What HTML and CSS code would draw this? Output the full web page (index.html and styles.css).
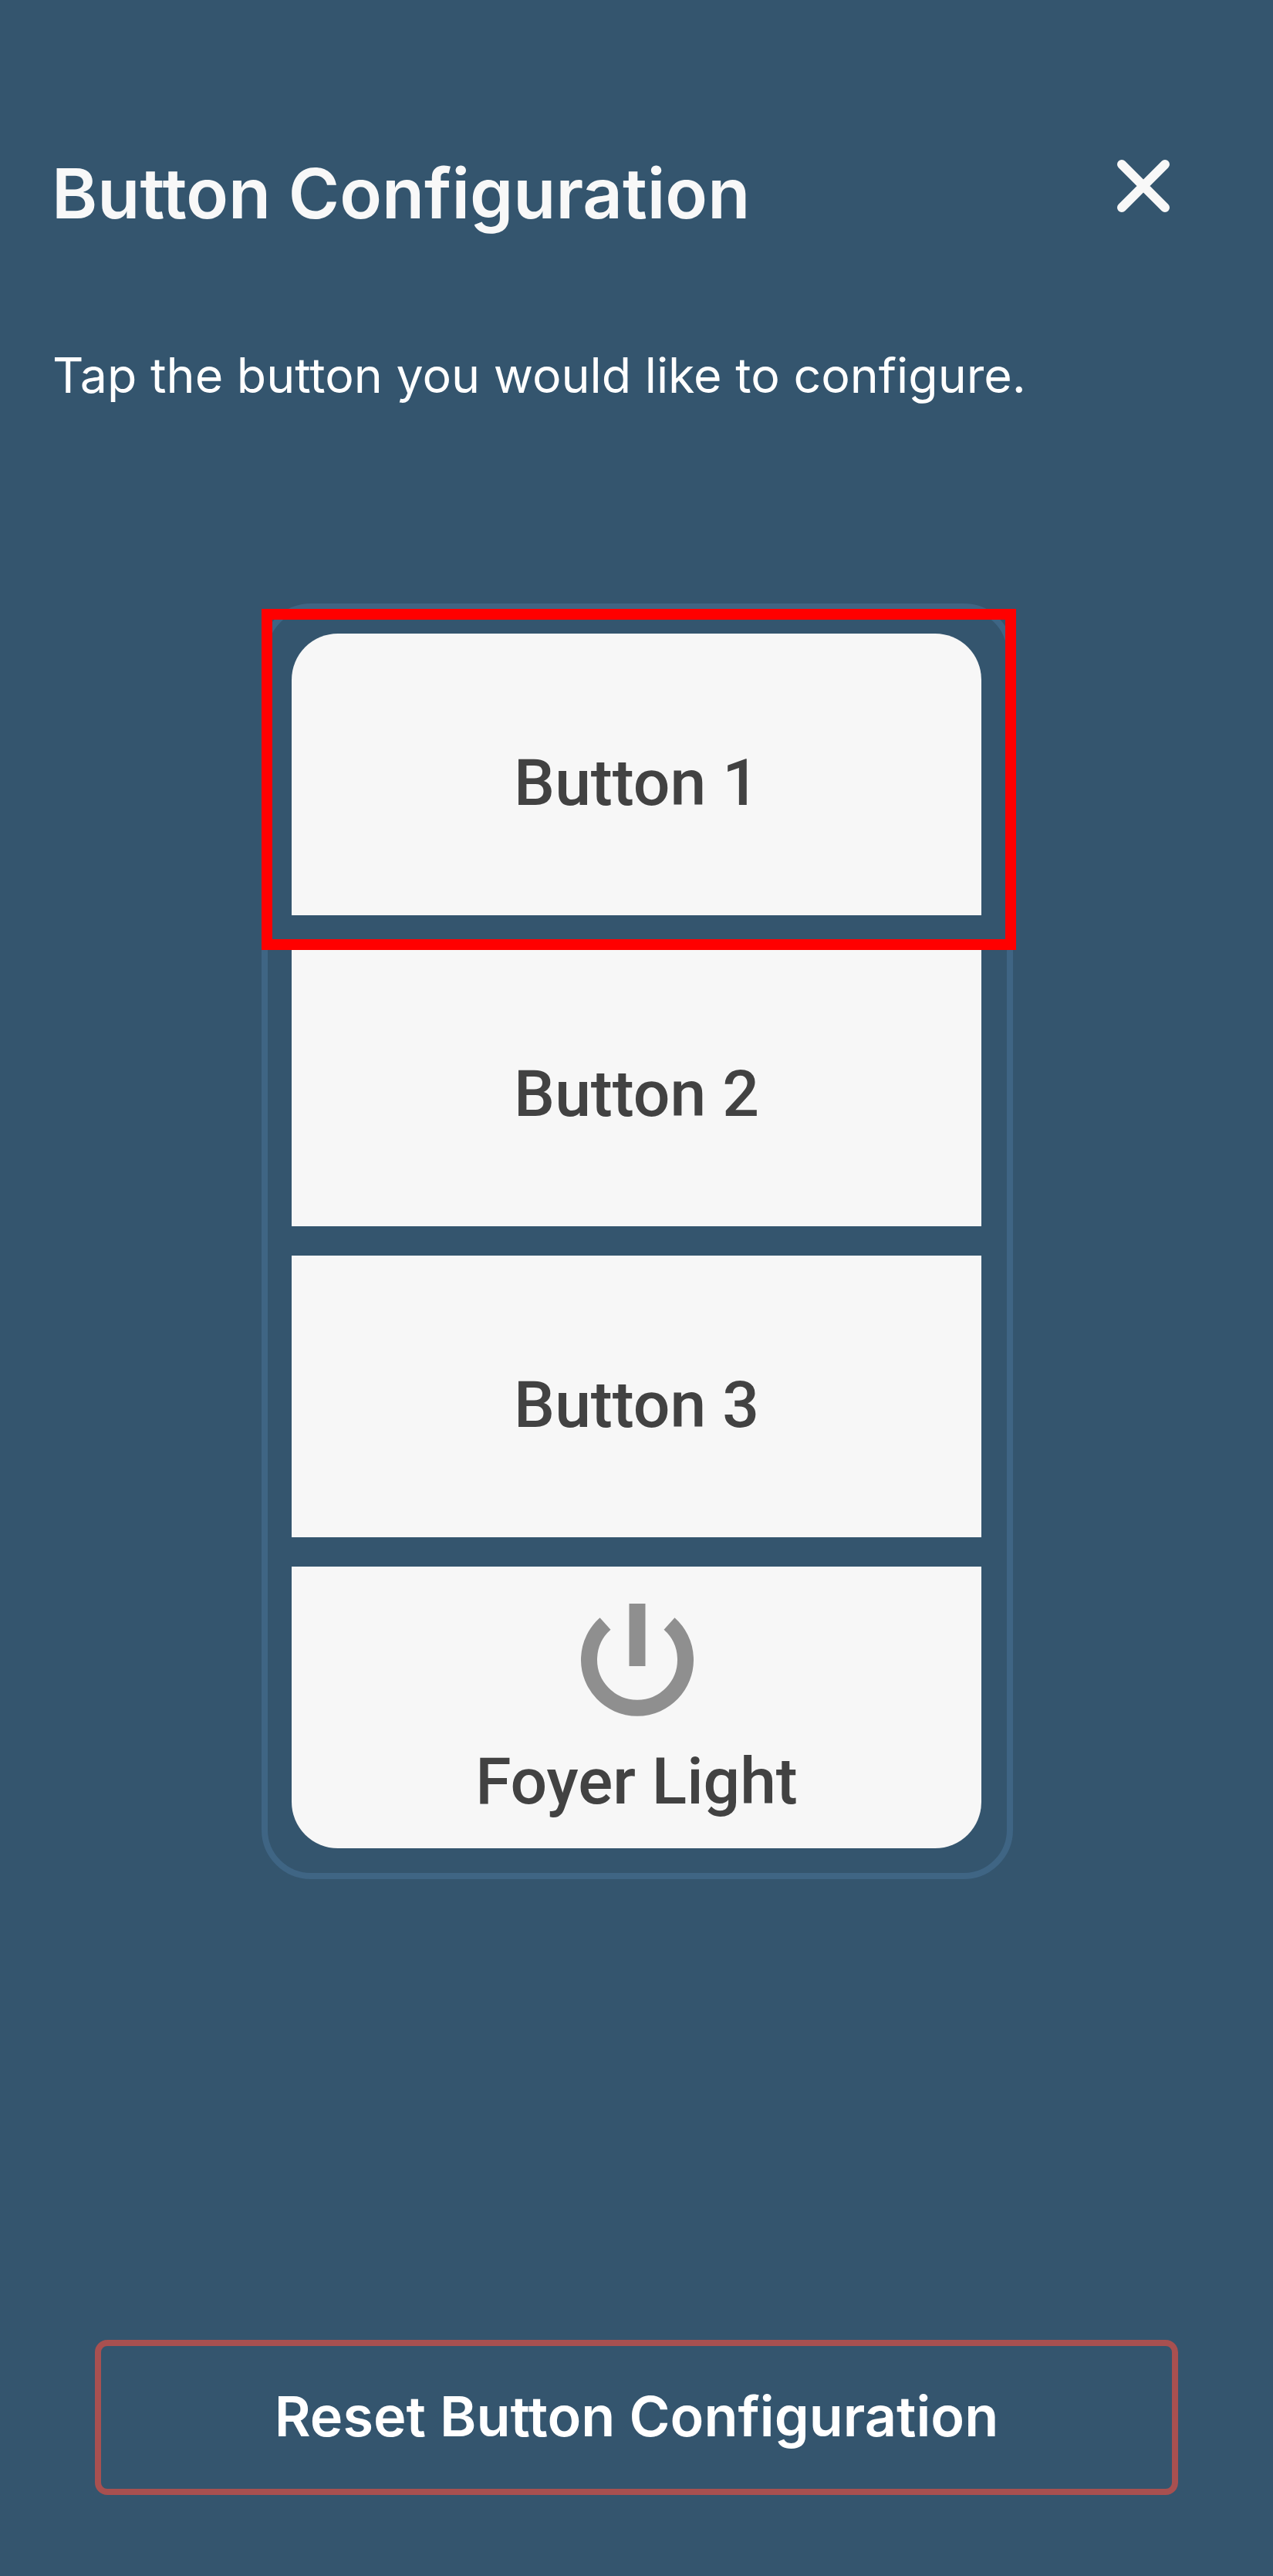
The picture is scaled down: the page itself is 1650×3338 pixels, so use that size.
FILE: index.html
```html
<!DOCTYPE html>
<html lang="en">
<head>
<meta charset="utf-8">
<title>Button Configuration</title>
<link rel="stylesheet" href="styles.css">
</head>
<body>
<main class="page">
  <header class="header">
    <h1 class="title">Button Configuration</h1>
    <button class="close" type="button" aria-label="Close">
      <svg class="close-icon" viewBox="0 0 68 68" aria-hidden="true">
        <path d="M6 6 L62 62 M62 6 L6 62"></path>
      </svg>
    </button>
  </header>
  <p class="hint">Tap the button you would like to configure.</p>
  <section class="keypad">
    <div class="key key-top"><span class="key-label">Button 1</span></div>
    <div class="key"><span class="key-label">Button 2</span></div>
    <div class="key"><span class="key-label">Button 3</span></div>
    <div class="key key-bottom">
      <svg class="power" viewBox="0 0 146 146" aria-hidden="true">
        <path class="power-ring" d="M31.5 26 A62.5 62.5 0 1 0 114.5 26"></path>
        <rect class="power-bar" x="62.5" y="0" width="21" height="81"></rect>
      </svg>
      <span class="key-label key-label-icon">Foyer Light</span>
    </div>
    <div class="highlight"></div>
  </section>
  <button class="reset" type="button">Reset Button Configuration</button>
</main>
</body>
</html>
```
FILE: styles.css
```css
* {
  box-sizing: border-box;
}

html,
body {
  margin: 0;
  padding: 0;
}

.page {
  display: flex;
  flex-direction: column;
  width: 1650px;
  height: 3338px;
  padding: 201px 0 105px;
  background: #34556e;
  font-family: "Inter", "Liberation Sans", sans-serif;
}

.header {
  display: flex;
  justify-content: space-between;
  align-items: flex-start;
  padding: 0 134px 0 67px;
}

.title {
  margin: 0;
  font-size: 90px;
  line-height: 100px;
  font-weight: 600;
  color: #f8f8f8;
}

.close {
  display: block;
  margin: 6px 0 0;
  padding: 0;
  width: 68px;
  height: 68px;
  border: 0;
  background: none;
}

.close-icon {
  display: block;
  width: 68px;
  height: 68px;
}

.close-icon path {
  fill: none;
  stroke: #f8f8f8;
  stroke-width: 12;
  stroke-linecap: round;
}

.hint {
  margin: 145px 0 0;
  padding: 0 68px;
  font-size: 62.7px;
  line-height: 80px;
  font-weight: 400;
  color: #ffffff;
}

.keypad {
  position: relative;
  display: flex;
  flex-direction: column;
  gap: 38px;
  width: 974px;
  height: 1653px;
  margin: 256px 0 0 339px;
  padding: 31px 33px 32px 31px;
  border: 8px solid #3f6584;
  border-radius: 64px;
}

.key {
  display: flex;
  align-items: center;
  justify-content: center;
  height: 365px;
  padding-top: 22px;
  background: #f7f7f7;
}

.key-top {
  border-radius: 60px 60px 0 0;
}

.key-bottom {
  flex-direction: column;
  justify-content: flex-start;
  padding-top: 48px;
  border-radius: 0 0 60px 60px;
}

.key-label {
  font-family: "Roboto", "Liberation Sans", sans-serif;
  font-size: 84px;
  line-height: 100px;
  font-weight: 500;
  color: #424242;
}

.key-label-icon {
  margin-top: 35px;
}

.power {
  display: block;
  width: 146px;
  height: 146px;
  margin-left: 2px;
}

.power-ring {
  fill: none;
  stroke: #8f8f8f;
  stroke-width: 21;
}

.power-bar {
  fill: #8f8f8f;
}

.highlight {
  position: absolute;
  top: -1px;
  left: -8px;
  width: 978px;
  height: 442px;
  border: 14px solid #ff0000;
}

.reset {
  display: block;
  width: 1404px;
  height: 201px;
  margin: auto 0 0 123px;
  padding: 0 0 5px;
  border: 8px solid #a85050;
  border-radius: 16px;
  background: none;
  font-family: "Inter", "Liberation Sans", sans-serif;
  font-size: 72px;
  font-weight: 600;
  color: #ffffff;
}
```
